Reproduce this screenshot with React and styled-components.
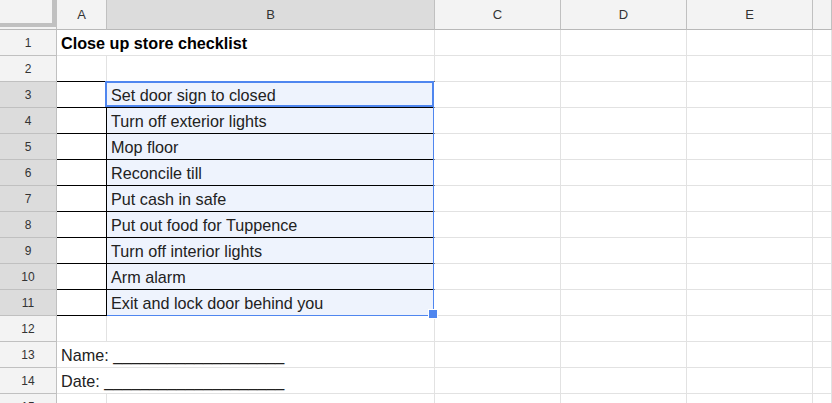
import React from 'react';
import styled, { createGlobalStyle, css } from 'styled-components';

const GlobalStyle = createGlobalStyle`
  html, body {
    margin: 0;
    padding: 0;
    background: #fff;
  }
  body {
    font-family: "Liberation Sans", Arial, sans-serif;
  }
`;

const COLUMNS = ['A', 'B', 'C', 'D', 'E', ''];
const SELECTED_COL = 'B';
const SELECTED_ROWS = [3, 11];

const tasks = [
  'Set door sign to closed',
  'Turn off exterior lights',
  'Mop floor',
  'Reconcile till',
  'Put cash in safe',
  'Put out food for Tuppence',
  'Turn off interior lights',
  'Arm alarm',
  'Exit and lock door behind you',
];

// text per cell, keyed "row:col"
const content = {
  '1:A': { text: 'Close up store checklist', bold: true, spill: true },
  '13:A': { text: 'Name: ___________________', spill: true },
  '14:A': { text: 'Date: ____________________', spill: true },
};
tasks.forEach((t, i) => {
  content[`${i + 3}:B`] = { text: t };
});

const inRange = row => row >= SELECTED_ROWS[0] && row <= SELECTED_ROWS[1];

const Sheet = () => {
  const rows = Array.from({ length: 15 }, (_, i) => i + 1);

  const cellFor = (row, col) => {
    const data = content[`${row}:${col}`] || {};
    const boxed = (col === 'A' || col === 'B') && (inRange(row) || row === 2);
    const right =
      data.spill ? 'none'
      : col === 'A' && inRange(row) ? 'black'
      : col === 'B' && inRange(row) ? 'white'
      : 'grid';
    return (
      <Cell
        key={`${row}-${col}`}
        $bold={data.bold}
        $right={right}
        $boxed={boxed}
        $selected={col === SELECTED_COL && inRange(row)}
      >
        {data.text}
      </Cell>
    );
  };

  return (
    <Grid>
      <Corner>
        <FreezeBars />
      </Corner>
      {COLUMNS.map(c => (
        <ColHeader key={`h-${c}`} $selected={c === SELECTED_COL}>{c}</ColHeader>
      ))}
      {rows.map(r => (
        <React.Fragment key={r}>
          <RowHeader $selected={inRange(r)}>{r}</RowHeader>
          {COLUMNS.map(c => cellFor(r, c || 'F'))}
        </React.Fragment>
      ))}
      <Selection />
      <ActiveCell />
      <FillHandle />
    </Grid>
  );
};

export default function App() {
  return (
    <>
      <GlobalStyle />
      <Sheet />
    </>
  );
}

const BLUE = '#4f86ef';

const Grid = styled.div`
  position: relative;
  width: 832px;
  height: 403px;
  overflow: hidden;
  display: grid;
  grid-template-columns: 57px 50px 328px 126px 126px 126px 1fr;
  grid-template-rows: 30px;
  grid-auto-rows: 26px;
  font-family: "Liberation Sans", Arial, sans-serif;
`;

const Corner = styled.div`
  box-sizing: border-box;
  background: #f3f3f3;
  border-right: 1px solid #c0c0c0;
  border-bottom: 1px solid #b8b8b8;
`;

const FreezeBars = styled.div`
  width: 52px;
  height: 23px;
  border-right: 4px solid #c0c0c0;
  border-bottom: 4px solid #c0c0c0;
`;

const headerBase = css`
  box-sizing: border-box;
  display: flex;
  align-items: center;
  justify-content: center;
  color: #333;
  background: ${p => (p.$selected ? '#dcdcdc' : '#f3f3f3')};
`;

const ColHeader = styled.div`
  ${headerBase};
  font-size: 13px;
  border-right: 1px solid #c0c0c0;
  border-bottom: 1px solid #b8b8b8;
`;

const RowHeader = styled.div`
  ${headerBase};
  font-size: 12px;
  padding-top: 1px;
  border-right: 1px solid #c0c0c0;
  border-bottom: 1px solid #c0c0c0;
`;

const rightLine = {
  none: 'none',
  black: '1px solid #000',
  white: '1px solid #fff',
  grid: '1px solid #e2e2e2',
};

const Cell = styled.div`
  box-sizing: border-box;
  display: flex;
  align-items: center;
  padding: 2px 4px 0;
  font-size: 16.2px;
  white-space: nowrap;
  overflow: visible;
  color: ${p => (p.$bold ? '#000' : '#222')};
  font-weight: ${p => (p.$bold ? 700 : 400)};
  background: ${p => (p.$selected ? '#eef3fd' : 'transparent')};
  border-right: ${p => rightLine[p.$right]};
  border-bottom: 1px solid ${p => (p.$boxed ? '#000' : '#e2e2e2')};
`;

const Selection = styled.div`
  position: absolute;
  left: 107px;
  top: 81px;
  width: 327px;
  height: 235px;
  box-sizing: border-box;
  border: 1px solid ${BLUE};
  border-left: none;
  pointer-events: none;
`;

const ActiveCell = styled.div`
  position: absolute;
  left: 105px;
  top: 81px;
  width: 329px;
  height: 26px;
  box-sizing: border-box;
  border: 2px solid ${BLUE};
  pointer-events: none;
`;

const FillHandle = styled.div`
  position: absolute;
  left: 428px;
  top: 309px;
  width: 10px;
  height: 10px;
  box-sizing: border-box;
  background: ${BLUE};
  border: 1px solid #fff;
`;
